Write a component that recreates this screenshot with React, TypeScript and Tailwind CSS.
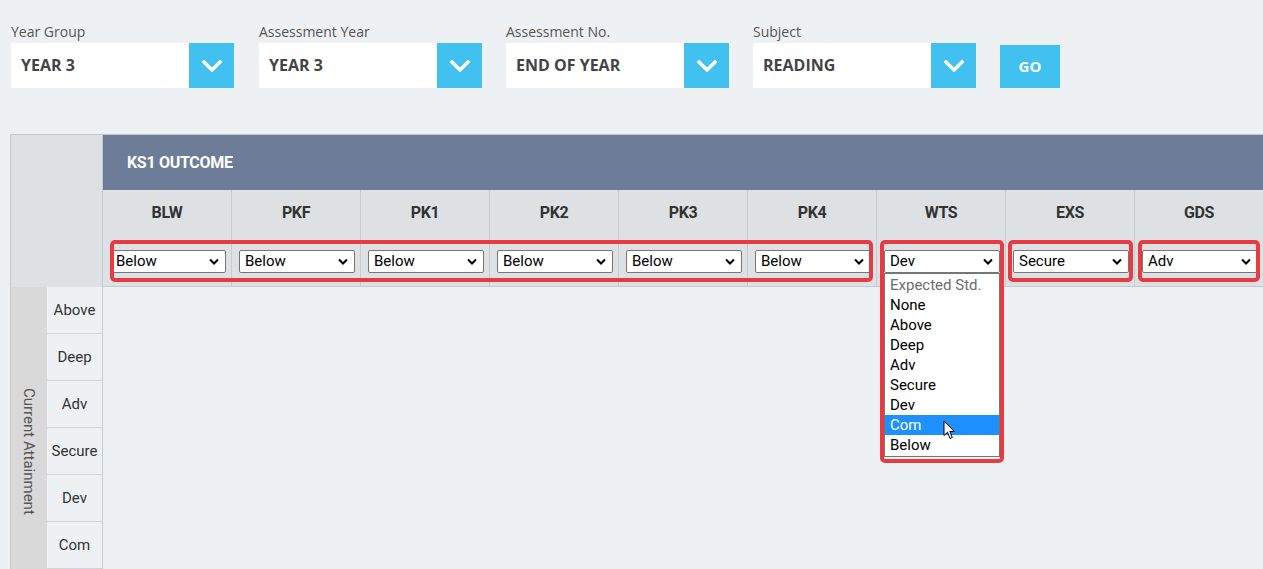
import React from "react";

const filters = [
  { label: "Year Group", value: "YEAR 3", ml: "" },
  { label: "Assessment Year", value: "YEAR 3", ml: "ml-[25px]" },
  { label: "Assessment No.", value: "END OF YEAR", ml: "ml-[24px]" },
  { label: "Subject", value: "READING", ml: "ml-[24px]" },
];

const cols = [
  { k: "BLW", v: "Below" },
  { k: "PKF", v: "Below" },
  { k: "PK1", v: "Below" },
  { k: "PK2", v: "Below" },
  { k: "PK3", v: "Below" },
  { k: "PK4", v: "Below" },
  { k: "WTS", v: "Dev" },
  { k: "EXS", v: "Secure" },
  { k: "GDS", v: "Adv" },
];

const rows = ["Above", "Deep", "Adv", "Secure", "Dev", "Com", ""];
const options = ["Expected Std.", "None", "Above", "Deep", "Adv", "Secure", "Dev", "Com", "Below"];

function BigChevron() {
  return (
    <svg width="20" height="12" viewBox="0 0 20 12" fill="none">
      <polyline points="2,2 10,10 18,2" stroke="white" strokeWidth="3.5" strokeLinecap="square" />
    </svg>
  );
}

function SmallChevron() {
  return (
    <svg width="10" height="7" viewBox="0 0 10 7" fill="none">
      <polyline points="1,1.5 5,5.5 9,1.5" stroke="black" strokeWidth="2" />
    </svg>
  );
}

function Cursor() {
  return (
    <svg width="13" height="20" viewBox="0 0 13 20">
      <path
        d="M1 1 L1 15.5 L4.5 12.2 L7 18.5 L9.3 17.5 L6.8 11.4 L11.5 11.4 Z"
        fill="white"
        stroke="black"
        strokeWidth="1"
        strokeLinejoin="round"
      />
    </svg>
  );
}

export default function App() {
  return (
    <div className="w-[1263px] h-[569px] overflow-hidden bg-[#eef1f4] font-['Roboto',sans-serif]">
      {/* Filters */}
      <div className="flex items-end pl-[11px] pt-[22px] font-['Open_Sans',sans-serif]">
        {filters.map((f, i) => (
          <div key={i} className={`w-[223px] ${f.ml}`}>
            <div className="h-[20px] leading-[20px] text-[14px] text-[#555] mb-[1px]">{f.label}</div>
            <div className="flex h-[45px] bg-white">
              <div className="flex-1 flex items-center pl-[10px] pb-[1px] text-[16px] font-bold text-[#444]">{f.value}</div>
              <div className="w-[45px] bg-[#42c0ef] flex items-center justify-center">
                <BigChevron />
              </div>
            </div>
          </div>
        ))}
        <div className="ml-[24px] w-[60px] h-[43px] bg-[#42c0ef] flex items-center justify-center text-white font-bold text-[15px]">
          GO
        </div>
      </div>

      {/* Table */}
      <div className="ml-[10px] mt-[46px] w-[1254px]">
        <div className="flex">
          <div className="w-[93px] h-[153px] shrink-0 bg-[#dde1e4] border-l border-t border-r border-[#c5c9cd]" />
          <div className="flex flex-col">
            <div className="h-[56px] bg-[#6d7d98] border-t border-[#c5c9cd] flex items-center pl-[24px] text-white font-bold text-[16px] tracking-[-0.3px]">
              KS1 OUTCOME
            </div>
            <div className="relative flex h-[97px] bg-[#dde1e4] border-b border-[#c5c9cd]">
              {cols.map((c) => (
                <div key={c.k} className="w-[129px] shrink-0 border-r border-[#c8ccd0] flex flex-col pt-[13px]">
                  <div className="h-[20px] leading-[20px] text-center text-[16px] font-bold text-[#333] tracking-[-0.4px]">
                    {c.k}
                  </div>
                  <div className="mt-[27px] ml-[7px] w-[116px] h-[23px] bg-white border border-[#767676] rounded-[2px] flex items-center justify-between pl-[5px] pr-[6px] text-[15px] text-black">
                    <span>{c.v}</span>
                    <SmallChevron />
                  </div>
                </div>
              ))}

              {/* Open dropdown */}
              <div className="absolute left-[781px] top-[83px] w-[116px] h-[184px] bg-white border border-[#767676] z-10 text-[15px] pt-[1px]">
                {options.map((o, i) => (
                  <div
                    key={o}
                    className={`h-[20px] leading-[20px] pl-[5px] ${
                      i === 0 ? "text-[#6d6d6d]" : o === "Com" ? "bg-[#1e90ff] text-white" : "text-black"
                    }`}
                  >
                    {o}
                  </div>
                ))}
              </div>
              <div className="absolute left-[840px] top-[230px] z-30">
                <Cursor />
              </div>

              {/* Red annotation boxes */}
              <div className="absolute left-[7px] top-[50px] w-[763px] h-[42px] border-[4px] border-[#e63b40] rounded-[5px] z-20" />
              <div className="absolute left-[777px] top-[50px] w-[124px] h-[223px] border-[4px] border-[#e63b40] rounded-[5px] z-20" />
              <div className="absolute left-[905px] top-[50px] w-[125px] h-[42px] border-[4px] border-[#e63b40] rounded-[5px] z-20" />
              <div className="absolute left-[1035px] top-[50px] w-[122px] h-[42px] border-[4px] border-[#e63b40] rounded-[5px] z-20" />
            </div>
          </div>
        </div>

        {/* Body */}
        <div className="flex">
          <div className="w-[37px] shrink-0 bg-[#d9d9d9] border-l border-[#c5c9cd] flex items-center justify-center">
            <span className="[writing-mode:vertical-rl] text-[15px] text-[#555]">Current Attainment</span>
          </div>
          <div className="w-[56px] shrink-0 border-r border-[#c8ccd0]">
            {rows.map((r, i) => (
              <div key={i} className="h-[47px] border-b border-[#d0d4d8] flex items-center justify-center text-[15px] text-[#333]">
                {r}
              </div>
            ))}
          </div>
          <div className="flex-1" />
        </div>
      </div>
    </div>
  );
}
